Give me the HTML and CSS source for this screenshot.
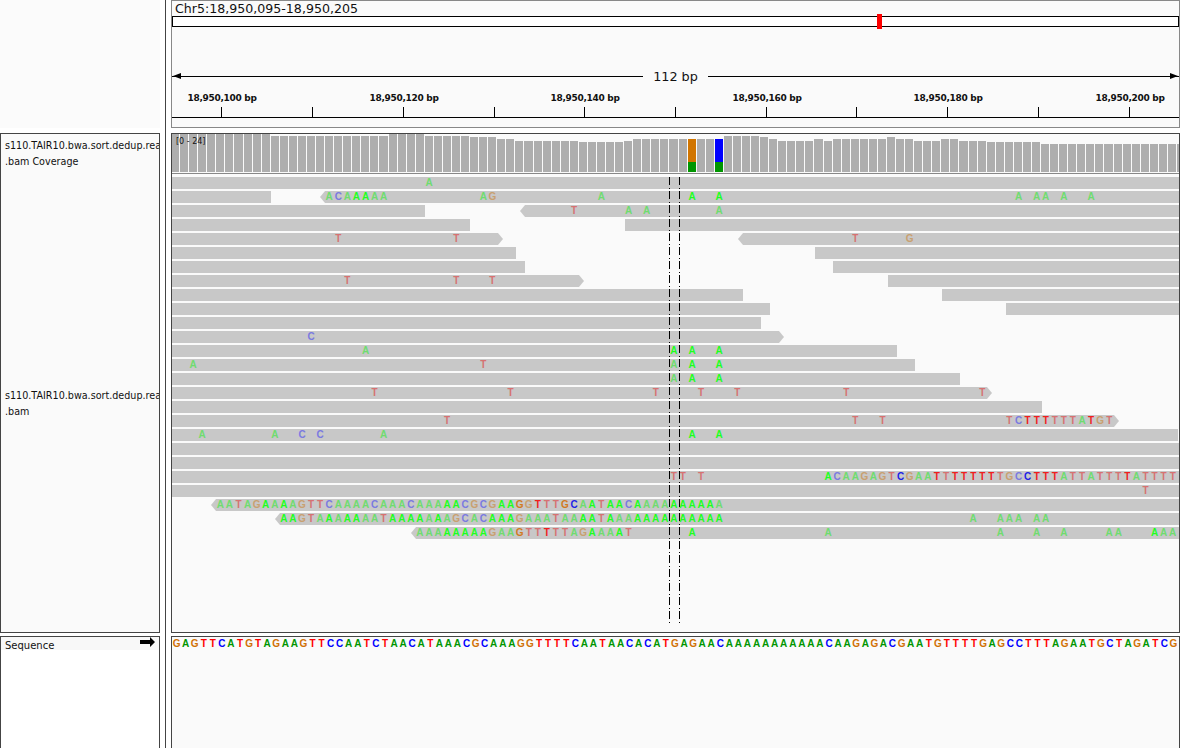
FILE: index.html
```html
<!DOCTYPE html>
<html lang="en">
<head>
  <meta charset="UTF-8" />
  <title>IGV - Chr5:18,950,095-18,950,205</title>
  <link rel="stylesheet" href="styles.css">
</head>
<body>
  <div class="igv">
    <div class="name-blank"></div>
    <div class="splitter"></div>
    <div class="header">
      <div class="locus">Chr5:18,950,095-18,950,205</div>
      <div class="ideogram"><div class="ideogram-mark"></div></div>
      <div class="span">
        <div class="span-line span-left"></div>
        <div class="span-label">112 bp</div>
        <div class="span-line span-right"></div>
      </div>
      <div class="ruler" id="ruler"></div>
    </div>

    <div class="names">
      <div class="name name-coverage">s110.TAIR10.bwa.sort.dedup.rea<br>.bam Coverage</div>
      <div class="name name-reads">s110.TAIR10.bwa.sort.dedup.rea<br>.bam</div>
    </div>
    <div class="tracks">
      <div class="coverage" id="coverage"></div>
      <div class="coverage-range">[0 - 24]</div>
      <div class="pileup" id="pileup"></div>
      <div class="center-line center-a"></div>
      <div class="center-line center-b"></div>
    </div>

    <div class="seq-name">
      <div class="seq-title">
        <span class="seq-label">Sequence</span>
        <svg class="seq-arrow" width="15" height="10" viewBox="0 0 15 10"><path d="M0 3h10V0l5 5-5 5V7H0z"/></svg>
      </div>
    </div>
    <div class="seq-track">
      <div class="sequence" id="sequence"></div>
    </div>
  </div>
  <script src="script.js"></script>
</body>
</html>
```

FILE: styles.css
```css
html, body {
  margin: 0;
  height: 100%;
  overflow: hidden;
  background-color: #fff;
}
body {
  font-family: "DejaVu Sans", sans-serif;
  color: #111;
}
.igv {
  display: grid;
  grid-template-columns: 160px 11px 1009px;
  grid-template-rows: 128px 505px 115px;
  height: 748px;
}
.name-blank {
  grid-column: 1;
  grid-row: 1;
  background-color: #fbfbfb;
}
.splitter {
  grid-column: 2;
  grid-row: 1 / 4;
  width: 1px;
  margin-left: 5px;
  background-color: #444;
}

/* header */
.header {
  grid-column: 3;
  grid-row: 1;
  box-sizing: border-box;
  border: 1px solid #888;
  background-color: #fafafa;
}
.locus {
  height: 15px;
  line-height: 15px;
  padding-left: 3px;
  font-size: 12.6px;
  white-space: nowrap;
}
.ideogram {
  position: relative;
  box-sizing: border-box;
  height: 11px;
  background-color: #fff;
  border: 1px solid #000;
}
.ideogram-mark {
  position: absolute;
  left: 704px;
  top: -3px;
  width: 5px;
  height: 15px;
  background-color: #ff0000;
}
.span {
  display: flex;
  align-items: center;
  height: 13px;
  margin-top: 43px;
}
.span-line {
  position: relative;
  flex: 1;
  height: 1px;
  background-color: #000;
}
.span-line::before {
  content: "";
  position: absolute;
  top: -3px;
  border-top: 3.5px solid transparent;
  border-bottom: 3.5px solid transparent;
}
.span-left::before { left: 1px; border-right: 8px solid #000; }
.span-right::before { right: 1px; border-left: 8px solid #000; }
.span-label {
  width: 65px;
  text-align: center;
  font-size: 12.8px;
  line-height: 13px;
}
.ruler {
  position: relative;
  height: 35px;
  border-bottom: 1px solid #000;
  box-sizing: border-box;
}
.tick {
  position: absolute;
  bottom: 0;
  width: 1px;
  height: 10px;
  background-color: #000;
}
.tick-label {
  position: absolute;
  top: 9px;
  width: 90px;
  margin-left: -45px;
  text-align: center;
  font-size: 9px;
  font-weight: bold;
  letter-spacing: -0.3px;
  line-height: 12px;
  white-space: nowrap;
}

/* track names */
.names {
  grid-column: 1;
  grid-row: 2;
  margin-top: 5px;
  box-sizing: border-box;
  border: 1px solid #444;
  background-color: #fafafa;
  overflow: hidden;
  position: relative;
}
.name {
  position: absolute;
  left: 4px;
  font-size: 9.6px;
  line-height: 16px;
  white-space: nowrap;
}
.name-coverage { top: 4px; }
.name-reads { top: 254px; }

/* data panel */
.tracks {
  grid-column: 3;
  grid-row: 2;
  margin-top: 5px;
  box-sizing: border-box;
  position: relative;
  border: 1px solid #444;
  background-color: #fafafa;
  overflow: hidden;
}
.coverage {
  display: flex;
  align-items: flex-end;
  height: 38px;
  margin-left: -1px;
  margin-bottom: 1px;
  overflow: hidden;
}
.bar {
  flex: 0 0 9.07px;
  box-sizing: border-box;
  padding-right: 1px;
  display: flex;
  flex-direction: column;
}
.bar-part { background-color: #aeaeae; }
.bar-top { flex: 1; }
.bar-orange { background-color: #d17500; }
.bar-blue { background-color: #0000ff; }
.bar-green { flex: 0 0 10px; background-color: #009600; }
.coverage-range {
  position: absolute;
  left: 4px;
  top: 2px;
  font-size: 8px;
  line-height: 11px;
  color: #111;
}
.pileup {
  border-top: 1px solid #888;
  padding-top: 3px;
}
.row {
  position: relative;
  height: 12px;
  margin-bottom: 2px;
}
.read {
  position: absolute;
  top: 0;
  height: 12px;
  background-color: #c8c8c8;
}
.read-fwd { clip-path: polygon(0 0, calc(100% - 5px) 0, 100% 50%, calc(100% - 5px) 100%, 0 100%); }
.read-rev { clip-path: polygon(5px 0, 100% 0, 100% 100%, 5px 100%, 0 50%); }
.base {
  position: absolute;
  top: 0;
  width: 9px;
  text-align: center;
  font-family: "Liberation Sans", sans-serif;
  font-size: 10px;
  font-weight: bold;
  line-height: 12px;
}
.faint-a { color: #6fdc6f; }
.faint-c { color: #7a7ae0; }
.faint-g { color: #c8a070; }
.faint-t { color: #d67272; }
.bright-a { color: #1eff1e; }
.bright-c { color: #1e1ee6; }
.bright-g { color: #d17a1e; }
.bright-t { color: #f01e1e; }

.center-line {
  position: absolute;
  top: 43px;
  width: 1px;
  height: 447px;
  background: repeating-linear-gradient(to bottom, #000 0 8px, transparent 8px 11px, #000 11px 12px, transparent 12px 14px);
}
.center-a { left: 497px; }
.center-b { left: 507px; }

/* sequence */
.seq-name {
  grid-column: 1;
  grid-row: 3;
  margin-top: 3px;
  box-sizing: border-box;
  border: 1px solid #444;
  border-bottom: none;
  background-color: #fff;
}
.seq-title {
  display: flex;
  align-items: center;
  justify-content: space-between;
  height: 13px;
  padding: 0 4px;
  background-color: #f8f8f8;
  font-size: 10px;
}
.seq-label { padding-top: 3px; }
.seq-arrow { margin-top: -3px; }
.seq-track {
  grid-column: 3;
  grid-row: 3;
  margin-top: 3px;
  box-sizing: border-box;
  border: 1px solid #444;
  border-bottom: none;
  background-color: #fafafa;
  overflow: hidden;
}
.sequence {
  display: flex;
  height: 14px;
}
.seq-base {
  flex: 0 0 9.07px;
  text-align: center;
  font-family: "Liberation Sans", sans-serif;
  font-size: 10px;
  font-weight: bold;
  line-height: 14px;
}
.seq-A { color: #009600; }
.seq-C { color: #0000ff; }
.seq-G { color: #d17105; }
.seq-T { color: #ff0000; }
```

FILE: script.js
```js
const BP = 9.07;
const ORIGIN = 170.5; // page x of the first base letter box
const TRACK_LEFT = 172;

const refSeq = "GAGTTCATGTAGAAGTTCCAATCTAACATAAACGCAAAGGTTTTCAATAACACATGAGAAC" +
  "AAAAAAAAAAA" + "CAAGAGACGAATGTTTTGAGCCTTTAGAATGCTAGATCG";

// top pixel of each coverage bar, as [first base, last base, top]
const coverageTops = [
  [0, 10, 134], [11, 23, 136], [24, 27, 134], [28, 32, 136], [33, 35, 137], [36, 37, 139],
  [38, 44, 141], [45, 49, 142], [50, 50, 141], [51, 60, 139], [61, 64, 136], [65, 65, 137],
  [66, 66, 139], [67, 70, 141], [71, 71, 139], [72, 72, 141], [73, 78, 139], [79, 79, 137],
  [80, 81, 139], [82, 84, 141], [85, 86, 139], [87, 89, 141], [90, 95, 142], [96, 111, 144]
];

const ticks = [221, 312, 403, 494, 584, 675, 766, 856, 947, 1038, 1129];
const tickLabels = [
  [222, "18,950,100 bp"], [404, "18,950,120 bp"], [585, "18,950,140 bp"],
  [767, "18,950,160 bp"], [948, "18,950,180 bp"], [1130, "18,950,200 bp"]
];

// each row: reads [x0, x1, direction], then bases [index, letters]; lower case = low quality
const rows = [
  { reads: [[172, 1180]], bases: [[28, "a"]] },
  { reads: [[172, 271], [320, 1180, "rev"]],
    bases: [[17, "acaAAaa"], [34, "ag"], [47, "a"], [57, "A"], [60, "A"], [93, "a"], [95, "aa"], [98, "a"], [101, "a"]] },
  { reads: [[172, 425], [520, 1180, "rev"]], bases: [[44, "t"], [50, "a"], [52, "a"], [60, "a"]] },
  { reads: [[172, 470], [625, 1180]], bases: [] },
  { reads: [[172, 503, "fwd"], [738, 1180, "rev"]], bases: [[18, "t"], [31, "t"], [75, "t"], [81, "g"]] },
  { reads: [[172, 516], [815, 1180]], bases: [] },
  { reads: [[172, 525], [833, 1180]], bases: [] },
  { reads: [[172, 584, "fwd"], [888, 1180]], bases: [[19, "t"], [31, "t"], [35, "t"]] },
  { reads: [[172, 743], [942, 1180]], bases: [] },
  { reads: [[172, 770], [1006, 1180]], bases: [] },
  { reads: [[172, 761]], bases: [] },
  { reads: [[172, 784, "fwd"]], bases: [[15, "c"]] },
  { reads: [[172, 897]], bases: [[21, "a"], [55, "A"], [57, "A"], [60, "A"]] },
  { reads: [[172, 915]], bases: [[2, "a"], [34, "t"], [55, "a"], [57, "A"], [60, "A"]] },
  { reads: [[172, 960]], bases: [[55, "a"], [57, "A"], [60, "A"]] },
  { reads: [[172, 992, "fwd"]], bases: [[22, "t"], [37, "t"], [53, "t"], [58, "t"], [62, "t"], [74, "t"], [89, "t"]] },
  { reads: [[172, 1042]], bases: [] },
  { reads: [[172, 1119, "fwd"]], bases: [[30, "t"], [75, "t"], [78, "t"], [92, "tcTTTtttaTgt"]] },
  { reads: [[172, 1178]], bases: [[3, "a"], [11, "a"], [14, "c"], [16, "c"], [23, "a"], [57, "A"], [60, "A"]] },
  { reads: [[172, 1180]], bases: [] },
  { reads: [[172, 1180]], bases: [] },
  { reads: [[172, 1180]],
    bases: [[55, "tt"], [58, "t"], [72, "AcaagagtCgaaTtTTTTTtgcCTTTattatttTatttt"]] },
  { reads: [[172, 1180]], bases: [[107, "t"]] },
  { reads: [[211, 1180, "rev"]], bases: [[5, "aatagAaAagttcaaaacaaacaaaAAcgcgAAGgTttGCaAtAAcAaaaAAAAAa"]] },
  { reads: [[275, 1180, "rev"]],
    bases: [[12, "AAgtaAaAAaatAAAAaAagcacAAAgaaataaAAtAaaAAAAAAAAAA"], [88, "a"], [91, "aaa"], [95, "aa"]] },
  { reads: [[411, 1180, "rev"]],
    bases: [[27, "aaaAAAAAgaaGttTttagAaaAt"], [57, "A"], [72, "a"], [91, "a"], [95, "a"], [98, "a"], [103, "aa"], [108, "Aaa"]] }
];

function el(className, parent, text) {
  const node = document.createElement("div");
  node.className = className;
  if (text) node.textContent = text;
  parent.appendChild(node);
  return node;
}

function baseX(i) {
  return ORIGIN + BP * i - TRACK_LEFT;
}

// ruler
const ruler = document.getElementById("ruler");
ticks.forEach(x => {
  el("tick", ruler).style.left = (x - TRACK_LEFT) + "px";
});
tickLabels.forEach(([x, text]) => {
  el("tick-label", ruler, text).style.left = (x - TRACK_LEFT) + "px";
});

// coverage
const coverage = document.getElementById("coverage");
coverageTops.forEach(([from, to, top]) => {
  for (let i = from; i <= to; i++) {
    const bar = el("bar", coverage);
    bar.style.height = (172 - top) + "px";
    if (i === 57 || i === 60) {
      el("bar-top " + (i === 57 ? "bar-orange" : "bar-blue"), bar);
      el("bar-green", bar);
    } else {
      el("bar-part bar-top", bar);
    }
  }
});

// reads
const pileup = document.getElementById("pileup");
rows.forEach(row => {
  const line = el("row", pileup);
  row.reads.forEach(([x0, x1, dir]) => {
    const read = el("read" + (dir ? " read-" + dir : ""), line);
    read.style.left = (x0 - TRACK_LEFT) + "px";
    read.style.width = (x1 - x0) + "px";
  });
  row.bases.forEach(([start, letters]) => {
    [...letters].forEach((ch, k) => {
      const low = ch === ch.toLowerCase();
      const cls = (low ? "faint-" : "bright-") + ch.toLowerCase();
      const base = el("base " + cls, line, ch.toUpperCase());
      base.style.left = baseX(start + k).toFixed(1) + "px";
    });
  });
});

// reference sequence
const sequence = document.getElementById("sequence");
[...refSeq].forEach(ch => el("seq-base seq-" + ch, sequence, ch));
```
